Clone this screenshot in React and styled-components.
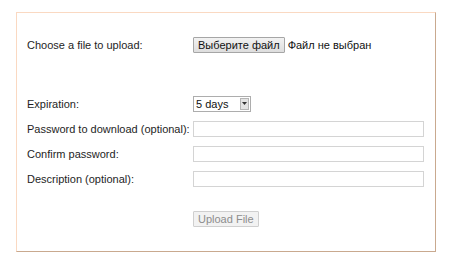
import React from "react";
import styled, { createGlobalStyle } from "styled-components";

const Global = createGlobalStyle`
  html, body { margin: 0; padding: 0; background: #fff; }
  body { font-family: "Liberation Sans", Arial, sans-serif; font-size: 11px; color: #1a1a1a; }
`;

const Page = styled.div`
  padding: 12px 14px 0 16px;
  width: 450px;
  box-sizing: border-box;
`;

const Panel = styled.div`
  width: 420px;
  height: 240px;
  box-sizing: border-box;
  border-top: 1px solid #fad9c2;
  border-left: 1px solid #fad9c2;
  border-right: 1px solid #c9a98f;
  border-bottom: 1px solid #c9a98f;
  padding: 19px 10px 0 10px;
  display: flex;
  flex-direction: column;
`;

const Row = styled.div`
  display: grid;
  grid-template-columns: 166px 1fr;
  align-items: center;
  height: 25px;
  margin-top: ${(p) => p.$gap || 0}px;
`;

const Label = styled.label`
  white-space: nowrap;
  color: #1e1e1e;
`;

const Field = styled.div`
  display: flex;
  align-items: center;
  gap: 3px;
`;

const Button = styled.button`
  font-family: "Liberation Sans", Arial, sans-serif;
  font-size: 11px;
  height: 16px;
  padding: 0 4px;
  margin: 0;
  border: 1px solid ${(p) => (p.disabled ? "#cfcfcf" : "#a6a6a6")};
  border-radius: 1px;
  background: ${(p) => (p.disabled ? "#f2f2f2" : "linear-gradient(#f2f2f2, #dddddd)")};
  color: ${(p) => (p.disabled ? "#8d8d8d" : "#111")};
  line-height: 14px;
`;

const Note = styled.span`
  color: #111;
`;

const SelectBox = styled.div`
  display: flex;
  width: 58px;
  height: 16px;
  box-sizing: border-box;
  border: 1px solid #adadad;
  background: #fff;
`;

const Select = styled.select`
  appearance: none;
  -webkit-appearance: none;
  flex: 1;
  min-width: 0;
  border: none;
  outline: none;
  background: transparent;
  font-family: "Liberation Sans", Arial, sans-serif;
  font-size: 11px;
  color: #111;
  padding: 0 0 0 2px;
  margin: 0;
  height: 14px;
  line-height: 14px;
`;

const Arrow = styled.span`
  width: 9px;
  height: 12px;
  margin: 1px 1px 0 0;
  box-sizing: border-box;
  border: 1px solid #b5b5b5;
  background: #e4e4e4;
  display: flex;
  align-items: center;
  justify-content: center;
`;

const TextInput = styled.input`
  width: 231px;
  height: 16px;
  box-sizing: border-box;
  border: 1px solid #d4d4d4;
  margin: 0;
  padding: 0 2px;
  font-family: "Liberation Sans", Arial, sans-serif;
  font-size: 11px;
  background: #fff;
  outline: none;
`;

export default function App() {
  return (
    <>
      <Global />
      <Page>
        <Panel>
          <Row>
            <Label>Choose a file to upload:</Label>
            <Field>
              <Button type="button">Выберите файл</Button>
              <Note>Файл не выбран</Note>
            </Field>
          </Row>
          <Row $gap={34}>
            <Label>Expiration:</Label>
            <Field>
              <SelectBox>
                <Select defaultValue="5">
                  <option value="5">5 days</option>
                </Select>
                <Arrow>
                  <svg width="5" height="3" viewBox="0 0 5 3">
                    <path d="M0 0H5L2.5 3Z" fill="#333" />
                  </svg>
                </Arrow>
              </SelectBox>
            </Field>
          </Row>
          <Row>
            <Label>Password to download (optional):</Label>
            <Field>
              <TextInput type="password" />
            </Field>
          </Row>
          <Row>
            <Label>Confirm password:</Label>
            <Field>
              <TextInput type="password" />
            </Field>
          </Row>
          <Row>
            <Label>Description (optional):</Label>
            <Field>
              <TextInput type="text" />
            </Field>
          </Row>
          <Row $gap={15}>
            <span />
            <Field>
              <Button type="button" disabled>Upload File</Button>
            </Field>
          </Row>
        </Panel>
      </Page>
    </>
  );
}
